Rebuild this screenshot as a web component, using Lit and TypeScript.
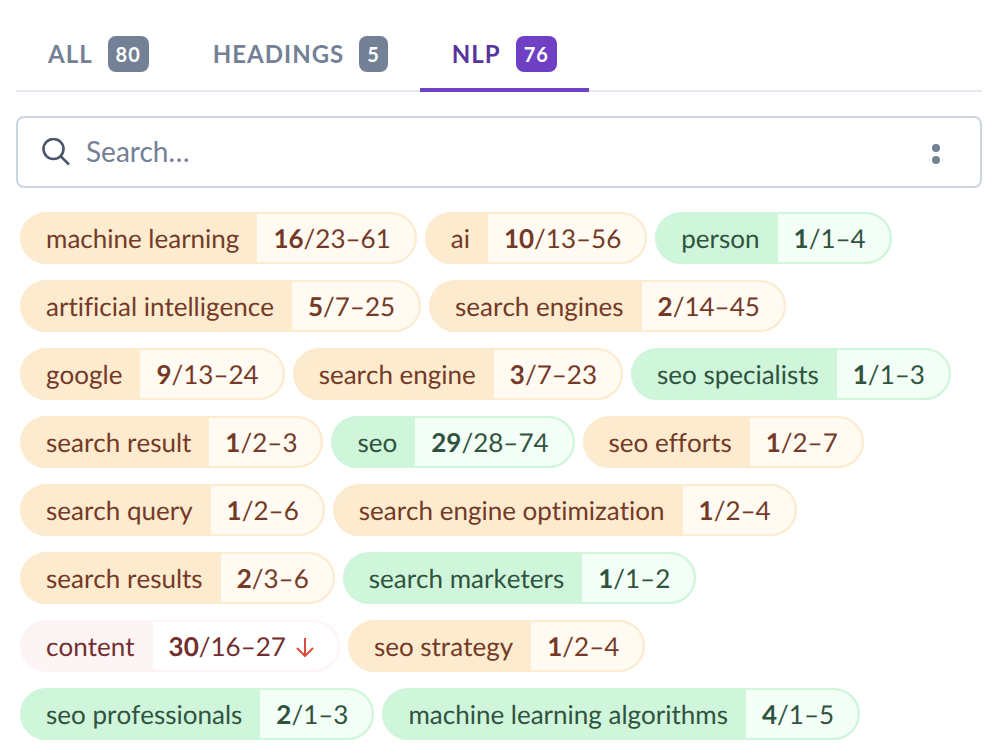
import { LitElement, html, css, svg, nothing } from "lit";
import { customElement, property, state } from "lit/decorators.js";
import { classMap } from "lit/directives/class-map.js";

type Tone = "low" | "good" | "over";

interface Term {
  name: string;
  count: number;
  range: string;
  tone: Tone;
}

const TABS = [
  { id: "all", label: "ALL", count: 80 },
  { id: "headings", label: "HEADINGS", count: 5 },
  { id: "nlp", label: "NLP", count: 76 },
];

const term = (name: string, count: number, range: string, tone: Tone = "low"): Term => ({
  name,
  count,
  range,
  tone,
});

const TERMS: Term[] = [
  term("machine learning", 16, "23–61"),
  term("ai", 10, "13–56"),
  term("person", 1, "1–4", "good"),
  term("artificial intelligence", 5, "7–25"),
  term("search engines", 2, "14–45"),
  term("google", 9, "13–24"),
  term("search engine", 3, "7–23"),
  term("seo specialists", 1, "1–3", "good"),
  term("search result", 1, "2–3"),
  term("seo", 29, "28–74", "good"),
  term("seo efforts", 1, "2–7"),
  term("search query", 1, "2–6"),
  term("search engine optimization", 1, "2–4"),
  term("search results", 2, "3–6"),
  term("search marketers", 1, "1–2", "good"),
  term("content", 30, "16–27", "over"),
  term("seo strategy", 1, "2–4"),
  term("seo professionals", 2, "1–3", "good"),
  term("machine learning algorithms", 4, "1–5", "good"),
];

const searchIcon = svg`
  <circle cx="11.5" cy="11" r="10" />
  <path d="M18.6 18.1 L27 26.5" />
`;

@customElement("term-chip")
class TermChip extends LitElement {
  @property({ attribute: false }) term!: Term;

  static styles = css`
    :host {
      display: block;
    }
    .chip {
      display: flex;
      border: 2px solid var(--edge);
      border-radius: 26px;
      overflow: hidden;
      background: var(--edge);
      color: var(--ink);
      line-height: 48px;
      white-space: nowrap;
    }
    .low {
      --edge: #fcebcf;
      --fill: #fffaf2;
      --ink: #743a27;
    }
    .good {
      --edge: #cff5da;
      --fill: #f3fef6;
      --ink: #305340;
    }
    .over {
      --edge: #fdf4f5;
      --fill: #ffffff;
      --ink: #722f2e;
    }
    .name {
      padding: 0 18px 0 24px;
    }
    .usage {
      display: flex;
      align-items: center;
      padding: 0 24px 0 16px;
      border-radius: 0 24px 24px 0;
      background: var(--fill);
    }
    b {
      font-weight: 700;
    }
    .arrow {
      width: 18px;
      height: 22px;
      margin-left: 10px;
      fill: none;
      stroke: #dc4b41;
      stroke-width: 2;
    }
  `;

  render() {
    const { name, count, range, tone } = this.term;
    return html`
      <div class=${classMap({ chip: true, [tone]: true })}>
        <span class="name">${name}</span>
        <span class="usage"
          ><span><b>${count}</b>/${range}</span>${tone === "over"
            ? html`<svg class="arrow" viewBox="0 0 18 22" role="img" aria-label="Reduce usage">
                <path d="M9 3V21M1 13L9 21L17 13" />
              </svg>`
            : nothing}</span
        >
      </div>
    `;
  }
}

@customElement("app-root")
class AppRoot extends LitElement {
  @state() private active = "nlp";
  @state() private query = "";

  static styles = css`
    :host {
      display: block;
      padding: 16px 20px 6px 16px;
      background: #ffffff;
      font-family: Lato, "Liberation Sans", sans-serif;
      font-size: 26px;
      font-kerning: none;
      font-variant-ligatures: none;
      text-rendering: geometricPrecision;
    }
    .tabs {
      display: flex;
      box-shadow: inset 0 -2px #e3e8f1;
    }
    .tab {
      display: flex;
      align-items: center;
      gap: 15px;
      height: 76px;
      padding: 4px 32px 0;
      border: 0;
      border-bottom: 4px solid transparent;
      background: none;
      color: #738095;
      font: 700 24px/36px Lato, "Liberation Sans", sans-serif;
      letter-spacing: 1px;
      cursor: pointer;
    }
    .badge {
      padding: 0 8px;
      border-radius: 8px;
      background: #738095;
      color: #ffffff;
      font-size: 20px;
      letter-spacing: 1px;
    }
    .tab.active {
      border-color: #6f40c3;
      color: #57359c;
    }
    .tab.active .badge {
      background: #6f40c3;
    }
    .search {
      display: flex;
      align-items: center;
      height: 68px;
      margin: 24px 0;
      padding: 0 24px;
      border: 2px solid #ccd6e1;
      border-radius: 8px;
    }
    .glass {
      width: 28px;
      height: 28px;
      fill: none;
      stroke: #4b5567;
      stroke-width: 2.6;
    }
    .field {
      flex: 1;
      min-width: 0;
      padding: 0 16px 2px;
      border: 0;
      outline: 0;
      background: none;
      color: #4b5567;
      font: 400 28px/40px Lato, "Liberation Sans", sans-serif;
    }
    .field::placeholder {
      color: #738095;
      opacity: 1;
    }
    .more {
      display: flex;
      padding: 4px 8px 0;
      margin-right: 8px;
      border: 0;
      background: none;
      cursor: pointer;
    }
    .more svg {
      width: 8px;
      height: 20px;
      fill: #738095;
    }
    .terms {
      display: flex;
      flex-wrap: wrap;
      gap: 16px 8px;
      margin: 0;
      padding: 0 0 0 4px;
      list-style: none;
    }
  `;

  render() {
    const shown = TERMS.filter((t) => t.name.includes(this.query.toLowerCase()));
    return html`
      <div class="tabs" role="tablist">
        ${TABS.map(
          (t) => html`<button
            class=${classMap({ tab: true, active: t.id === this.active })}
            role="tab"
            aria-selected=${t.id === this.active}
            @click=${() => (this.active = t.id)}
          >
            <span>${t.label}</span><span class="badge">${t.count}</span>
          </button>`
        )}
      </div>
      <div class="search">
        <svg class="glass" viewBox="0 0 28 28" aria-hidden="true">${searchIcon}</svg>
        <input
          class="field"
          type="text"
          aria-label="Search terms"
          placeholder="Search…"
          .value=${this.query}
          @input=${(e: Event) => (this.query = (e.target as HTMLInputElement).value)}
        />
        <button class="more" aria-label="More options">
          <svg viewBox="0 0 8 20" aria-hidden="true">
            <circle cx="4" cy="4" r="4" />
            <circle cx="4" cy="16" r="4" />
          </svg>
        </button>
      </div>
      <ul class="terms">
        ${shown.map((t) => html`<li><term-chip .term=${t}></term-chip></li>`)}
      </ul>
    `;
  }
}
